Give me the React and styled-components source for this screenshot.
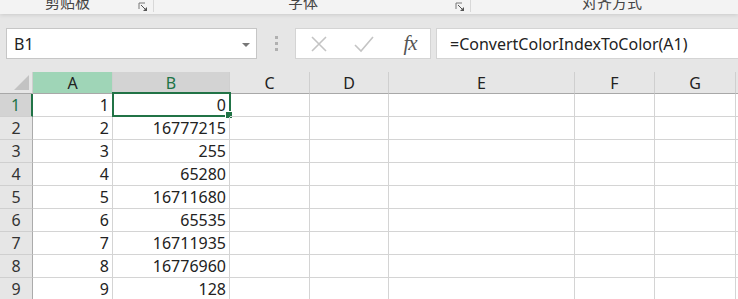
import React from 'react';
import styled, { createGlobalStyle } from 'styled-components';

const GlobalStyle = createGlobalStyle`
  html, body {
    margin: 0;
    padding: 0;
    background: #e6e6e6;
    overflow: hidden;
  }
  body {
    font-family: "Noto Sans", "Noto Sans CJK SC", sans-serif;
  }
`;

const Page = styled.div`
  width: 738px;
  height: 299px;
  overflow: hidden;
  background: #e6e6e6;
`;

const Ribbon = styled.div`
  display: flex;
  height: 14px;
  background: #f3f3f3;
  box-shadow: 0 1px 4px rgba(0, 0, 0, 0.12);
  position: relative;
  z-index: 1;
`;

const Group = styled.div`
  position: relative;
  width: ${props => props.$w}px;
  flex-shrink: 0;
  display: flex;
  justify-content: center;
  padding-right: 18px;
  box-sizing: border-box;
  border-right: ${props => (props.$last ? 'none' : '1px solid #d8d8d8')};
  height: 12px;
  overflow: hidden;
`;

const GroupLabel = styled.div`
  font-family: "Noto Sans CJK SC", sans-serif;
  font-size: 15px;
  line-height: 15px;
  margin-top: -6px;
  color: #444;
`;

const Launcher = styled.svg`
  position: absolute;
  right: 5px;
  top: 2px;
`;

const FormulaBar = styled.div`
  display: flex;
  align-items: center;
  padding: 14px 0 13px 6px;
`;

const NameBox = styled.div`
  width: 251px;
  height: 31px;
  box-sizing: border-box;
  background: #fff;
  border: 1px solid #c6c6c6;
  display: flex;
  align-items: center;
  justify-content: space-between;
  padding: 0 6px 0 7px;
  font-size: 16px;
  color: #222;
  flex-shrink: 0;
`;

const Caret = styled.span`
  width: 0;
  height: 0;
  border-left: 4px solid transparent;
  border-right: 4px solid transparent;
  border-top: 4px solid #777;
  margin-top: 2px;
`;

const Grip = styled.div`
  width: 38px;
  flex-shrink: 0;
  display: flex;
  flex-direction: column;
  align-items: center;
  gap: 3px;
  & > span {
    width: 3px;
    height: 3px;
    background: #b0b0b0;
  }
`;

const ButtonBox = styled.div`
  width: 136px;
  height: 31px;
  box-sizing: border-box;
  background: #fff;
  border: 1px solid #d4d4d4;
  display: flex;
  align-items: center;
  flex-shrink: 0;
`;

const IconSlot = styled.div`
  width: ${props => props.$w}px;
  display: flex;
  justify-content: center;
  align-items: center;
`;

const Fx = styled.span`
  font-family: "Liberation Serif", serif;
  font-style: italic;
  font-size: 21px;
  color: #555;
  letter-spacing: -1px;
  margin-left: 4px;
`;

const FormulaInput = styled.div`
  flex: 1;
  height: 31px;
  margin-left: 5px;
  box-sizing: border-box;
  background: #fff;
  border: 1px solid #d4d4d4;
  border-right: none;
  display: flex;
  align-items: center;
  padding-left: 13px;
  font-size: 16px;
  color: #222;
  white-space: nowrap;
`;

const Sheet = styled.div`
  background: #fff;
`;

const Row = styled.div`
  display: flex;
  height: ${props => props.$h}px;
`;

const HeaderCell = styled.div`
  width: ${props => props.$w}px;
  flex-shrink: 0;
  box-sizing: border-box;
  background: ${props => props.$bg || '#e6e6e6'};
  color: ${props => props.$color || '#222'};
  border-right: 1px solid #cfcfcf;
  border-bottom: 1px solid #a8a8a8;
  display: flex;
  align-items: center;
  justify-content: center;
  font-size: 16px;
  padding-top: 1px;
`;

const Corner = styled(HeaderCell)`
  justify-content: flex-end;
  align-items: flex-end;
  padding: 0 3px 3px 0;
`;

const RowHead = styled.div`
  width: 33px;
  flex-shrink: 0;
  box-sizing: border-box;
  background: ${props => (props.$active ? '#d3d3d3' : '#e6e6e6')};
  color: ${props => (props.$active ? '#217346' : '#333')};
  border-bottom: 1px solid #cfcfcf;
  border-right: ${props => (props.$active ? '2px solid #217346' : '1px solid #ababab')};
  display: flex;
  align-items: center;
  justify-content: center;
  font-size: 16px;
`;

const Cell = styled.div`
  position: relative;
  width: ${props => props.$w}px;
  flex-shrink: 0;
  box-sizing: border-box;
  border-right: 1px solid #d4d4d4;
  border-bottom: 1px solid #d4d4d4;
  display: flex;
  align-items: center;
  justify-content: flex-end;
  padding-right: 3px;
  font-size: 16px;
  color: #222;
`;

const Selection = styled.div`
  position: absolute;
  left: -1px;
  top: -2px;
  right: -2px;
  bottom: -1px;
  border: 2px solid #217346;
  pointer-events: none;
`;

const Handle = styled.div`
  position: absolute;
  right: -4px;
  bottom: -4px;
  width: 6px;
  height: 6px;
  background: #217346;
  border: 1px solid #fff;
`;

const columns = [
  { name: 'A', w: 80 },
  { name: 'B', w: 117 },
  { name: 'C', w: 80 },
  { name: 'D', w: 79 },
  { name: 'E', w: 186 },
  { name: 'F', w: 80 },
  { name: 'G', w: 81 },
  { name: 'H', w: 80 }
];

const data = [
  [1, 0],
  [2, 16777215],
  [3, 255],
  [4, 65280],
  [5, 16711680],
  [6, 65535],
  [7, 16711935],
  [8, 16776960],
  [9, 128]
];

const LauncherIcon = () => (
  <Launcher width="10" height="10" viewBox="0 0 10 10">
    <path d="M1 7V1h6" fill="none" stroke="#777" strokeWidth="1" />
    <path d="M3 3l5 5" fill="none" stroke="#555" strokeWidth="1" />
    <path d="M9 5v4H5z" fill="#555" />
  </Launcher>
);

const headerStyle = (name) => {
  if (name === 'A') return { bg: '#9fd5b7', color: '#222' };
  if (name === 'B') return { bg: '#d3d3d3', color: '#217346' };
  return {};
};

const App = () => (
  <Page>
    <GlobalStyle />
    <Ribbon>
      <Group $w={154}>
        <GroupLabel>剪贴板</GroupLabel>
        <LauncherIcon />
      </Group>
      <Group $w={317}>
        <GroupLabel>字体</GroupLabel>
        <LauncherIcon />
      </Group>
      <Group $w={300} $last>
        <GroupLabel>对齐方式</GroupLabel>
      </Group>
    </Ribbon>

    <FormulaBar>
      <NameBox>
        B1
        <Caret />
      </NameBox>
      <Grip>
        <span />
        <span />
        <span />
      </Grip>
      <ButtonBox>
        <IconSlot $w={46}>
          <svg width="18" height="18" viewBox="0 0 18 18">
            <path d="M2 2l14 14M16 2L2 16" stroke="#c4c4c4" strokeWidth="1.6" fill="none" />
          </svg>
        </IconSlot>
        <IconSlot $w={44}>
          <svg width="20" height="18" viewBox="0 0 20 18">
            <path d="M1 10l6 6L19 2" stroke="#c4c4c4" strokeWidth="1.6" fill="none" />
          </svg>
        </IconSlot>
        <IconSlot $w={44}>
          <Fx>fx</Fx>
        </IconSlot>
      </ButtonBox>
      <FormulaInput>=ConvertColorIndexToColor(A1)</FormulaInput>
    </FormulaBar>

    <Sheet>
      <Row $h={22}>
        <Corner $w={33}>
          <svg width="15" height="15" viewBox="0 0 15 15">
            <polygon points="15,0 15,15 0,15" fill="#c3c3c3" />
          </svg>
        </Corner>
        {columns.map(col => {
          const s = headerStyle(col.name);
          return (
            <HeaderCell key={col.name} $w={col.w} $bg={s.bg} $color={s.color}>
              {col.name}
            </HeaderCell>
          );
        })}
      </Row>
      {data.map(([a, b], i) => (
        <Row key={a} $h={23}>
          <RowHead $active={i === 0}>{i + 1}</RowHead>
          <Cell $w={80}>{a}</Cell>
          <Cell $w={117}>
            {b}
            {i === 0 && (
              <Selection>
                <Handle />
              </Selection>
            )}
          </Cell>
          {columns.slice(2).map(col => (
            <Cell key={col.name} $w={col.w} />
          ))}
        </Row>
      ))}
    </Sheet>
  </Page>
);

export default App;
